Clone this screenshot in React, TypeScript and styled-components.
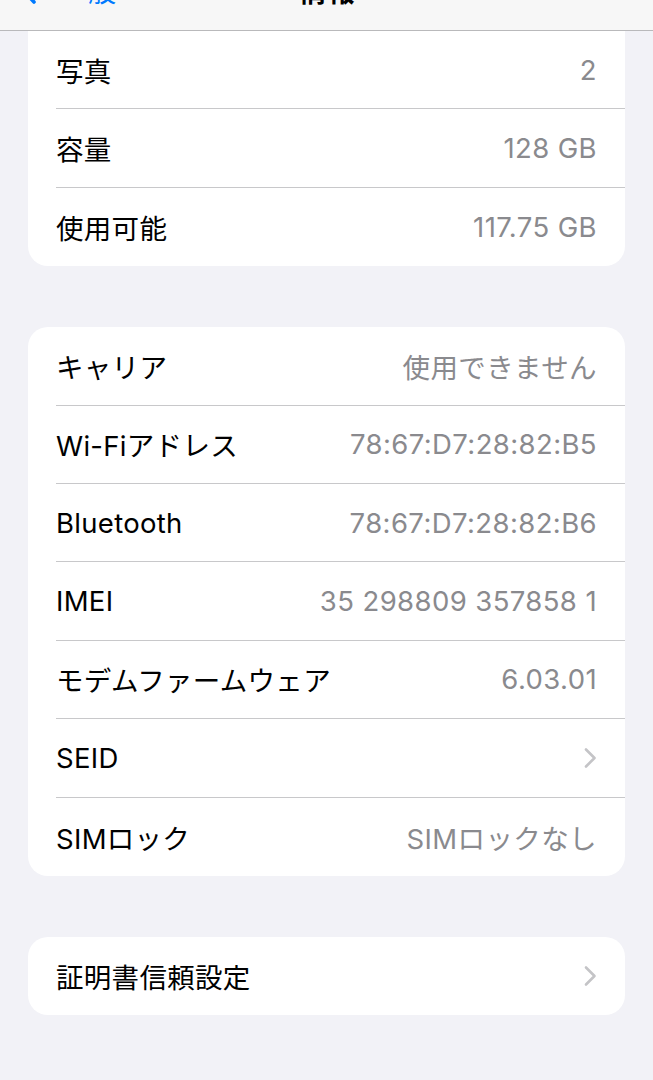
import styled, { createGlobalStyle } from "styled-components";

const GlobalStyle = createGlobalStyle`
  html, body {
    margin: 0;
    padding: 0;
    background: #f2f2f7;
  }
  body {
    font-family: Inter, "Noto Sans CJK JP", sans-serif;
    -webkit-font-smoothing: antialiased;
  }
`;

type Row = { label: string; value?: string; link?: boolean };

const storage: Row[] = [
  { label: "写真", value: "2" },
  { label: "容量", value: "128 GB" },
  { label: "使用可能", value: "117.75 GB" },
];

const network: Row[] = [
  { label: "キャリア", value: "使用できません" },
  { label: "Wi-Fiアドレス", value: "78:67:D7:28:82:B5" },
  { label: "Bluetooth", value: "78:67:D7:28:82:B6" },
  { label: "IMEI", value: "35 298809 357858 1" },
  { label: "モデムファームウェア", value: "6.03.01" },
  { label: "SEID", link: true },
  { label: "SIMロック", value: "SIMロックなし" },
];

const certs: Row[] = [{ label: "証明書信頼設定", link: true }];

function Chevron() {
  return (
    <svg width="14" height="22" viewBox="0 0 14 22" fill="none">
      <path
        d="M3 2.5 L11.5 11 L3 19.5"
        stroke="#c4c4c7"
        strokeWidth="2.6"
        strokeLinecap="round"
        strokeLinejoin="round"
      />
    </svg>
  );
}

function Group({ rows, clipped }: { rows: Row[]; clipped?: boolean }) {
  return (
    <Card $clipped={clipped}>
      {rows.map((r) => (
        <Item key={r.label}>
          <Label>{r.label}</Label>
          {r.value && <Value>{r.value}</Value>}
          {r.link && <Chevron />}
        </Item>
      ))}
    </Card>
  );
}

export default function App() {
  return (
    <>
      <GlobalStyle />
      <Page>
        <NavBar>
          <NavInner>
            <Back>
              <svg width="18" height="30" viewBox="0 0 18 30" fill="none">
                <path
                  d="M14 3 L3 15 L14 27"
                  stroke="#007aff"
                  strokeWidth="3.6"
                  strokeLinecap="round"
                  strokeLinejoin="round"
                />
              </svg>
              <BackText>一般</BackText>
            </Back>
            <Title>情報</Title>
          </NavInner>
        </NavBar>
        <Content>
          <Group rows={storage} clipped />
          <Group rows={network} />
          <Group rows={certs} />
        </Content>
      </Page>
    </>
  );
}

const Page = styled.div`
  width: 653px;
  min-height: 1080px;
  background: #f2f2f7;
`;

const NavBar = styled.div`
  height: 30px;
  background: #f7f7f7;
  border-bottom: 1px solid #b9b9bb;
  overflow: hidden;
  position: relative;
`;

const NavInner = styled.div`
  height: 50px;
  margin-top: -35px;
  display: flex;
  align-items: center;
  justify-content: center;
  position: relative;
`;

const Back = styled.div`
  position: absolute;
  left: 20px;
  top: 0;
  height: 50px;
  display: flex;
  align-items: center;
  gap: 22px;
`;

const BackText = styled.span`
  color: #007aff;
  font-size: 28px;
`;

const Title = styled.span`
  font-size: 28px;
  font-weight: 700;
  color: #000;
`;

const Content = styled.div`
  padding: 0 28px 66px;
  display: flex;
  flex-direction: column;
  gap: 61px;
`;

const Card = styled.div<{ $clipped?: boolean }>`
  background: #fff;
  border-radius: ${(p) => (p.$clipped ? "0 0 20px 20px" : "20px")};
`;

const Item = styled.div`
  height: 78.4px;
  margin-left: 28px;
  padding-right: 28px;
  display: flex;
  align-items: center;
  justify-content: space-between;
  box-sizing: border-box;
  border-bottom: 1px solid #c8c8ca;

  &:last-child {
    border-bottom: none;
  }
`;

const Label = styled.span`
  font-size: 27.5px;
  letter-spacing: 0.3px;
  color: #000;
  white-space: nowrap;
`;

const Value = styled.span`
  font-size: 27.5px;
  letter-spacing: 0.4px;
  color: #8a8a8e;
  white-space: nowrap;
`;
